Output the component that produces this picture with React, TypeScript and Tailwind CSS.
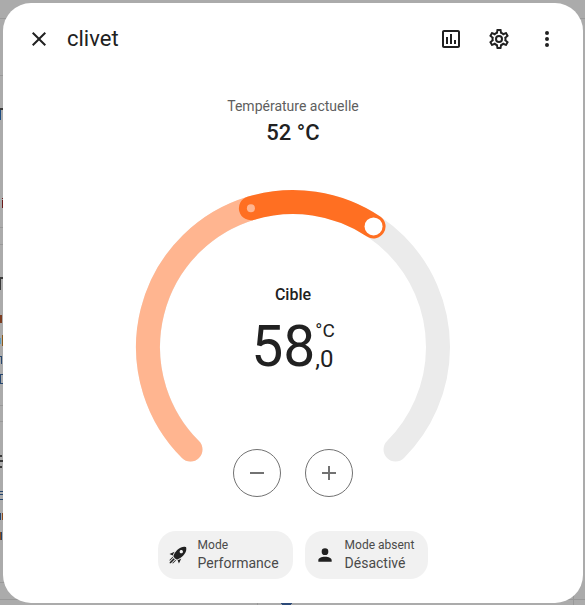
import { useState, type ReactNode } from "react";

const ICONS = {
  close:
    "M19,6.41L17.59,5L12,10.59L6.41,5L5,6.41L10.59,12L5,17.59L6.41,19L12,13.41L17.59,19L19,17.59L13.41,12L19,6.41Z",
  chart:
    "M9 17H7V10H9V17M13 17H11V7H13V17M17 17H15V13H17V17M19 19H5V5H19V19.1M19 3H5C3.9 3 3 3.9 3 5V19C3 20.1 3.9 21 5 21H19C20.1 21 21 20.1 21 19V5C21 3.9 20.1 3 19 3Z",
  cog: "M12,8A4,4 0 0,1 16,12A4,4 0 0,1 12,16A4,4 0 0,1 8,12A4,4 0 0,1 12,8M12,10A2,2 0 0,0 10,12A2,2 0 0,0 12,14A2,2 0 0,0 14,12A2,2 0 0,0 12,10M10,22C9.75,22 9.54,21.82 9.5,21.58L9.13,18.93C8.5,18.68 7.96,18.34 7.44,17.94L4.95,18.95C4.73,19.03 4.46,18.95 4.34,18.73L2.34,15.27C2.21,15.05 2.27,14.78 2.46,14.63L4.57,12.97L4.5,12L4.57,11L2.46,9.37C2.27,9.22 2.21,8.95 2.34,8.73L4.34,5.27C4.46,5.05 4.73,4.96 4.95,5.05L7.44,6.05C7.96,5.66 8.5,5.32 9.13,5.07L9.5,2.42C9.54,2.18 9.75,2 10,2H14C14.25,2 14.46,2.18 14.5,2.42L14.87,5.07C15.5,5.32 16.04,5.66 16.56,6.05L19.05,5.05C19.27,4.96 19.54,5.05 19.66,5.27L21.66,8.73C21.79,8.95 21.73,9.22 21.54,9.37L19.43,11L19.5,12L19.43,13L21.54,14.63C21.73,14.78 21.79,15.05 21.66,15.27L19.66,18.73C19.54,18.95 19.27,19.04 19.05,18.95L16.56,17.95C16.04,18.34 15.5,18.68 14.87,18.93L14.5,21.58C14.46,21.82 14.25,22 14,22H10M11.25,4L10.88,6.61C9.68,6.86 8.62,7.5 7.85,8.39L5.44,7.35L4.69,8.65L6.8,10.2C6.4,11.37 6.4,12.64 6.8,13.8L4.68,15.36L5.43,16.66L7.86,15.62C8.63,16.5 9.68,17.14 10.87,17.38L11.24,20H12.76L13.13,17.39C14.32,17.14 15.37,16.5 16.14,15.62L18.57,16.66L19.32,15.36L17.2,13.81C17.6,12.64 17.6,11.37 17.2,10.2L19.31,8.65L18.56,7.35L16.15,8.39C15.38,7.5 14.32,6.86 13.12,6.62L12.75,4H11.25Z",
  dots: "M12,16A2,2 0 0,1 14,18A2,2 0 0,1 12,20A2,2 0 0,1 10,18A2,2 0 0,1 12,16M12,10A2,2 0 0,1 14,12A2,2 0 0,1 12,14A2,2 0 0,1 10,12A2,2 0 0,1 12,10M12,4A2,2 0 0,1 14,6A2,2 0 0,1 12,8A2,2 0 0,1 10,6A2,2 0 0,1 12,4Z",
  minus: "M19,13H5V11H19V13Z",
  plus: "M19,13H13V19H11V13H5V11H11V5H13V11H19V13Z",
  rocket:
    "M13.13 22.19L11.5 18.36C13.07 17.78 14.54 17 15.9 16.09L13.13 22.19M5.64 12.5L1.81 10.87L7.91 8.1C7 9.46 6.22 10.93 5.64 12.5M21.61 2.39C21.61 2.39 16.66 .269 11 5.93C8.81 8.12 7.5 10.53 6.65 12.64C6.37 13.39 6.56 14.21 7.11 14.77L9.24 16.89C9.79 17.45 10.61 17.63 11.36 17.35C13.5 16.53 15.88 15.19 18.07 13C23.73 7.34 21.61 2.39 21.61 2.39M14.54 9.46C13.76 8.68 13.76 7.41 14.54 6.63S16.59 5.85 17.37 6.63C18.14 7.41 18.15 8.68 17.37 9.46C16.59 10.24 15.32 10.24 14.54 9.46M6.24 22L9.88 18.36C9.54 18.27 9.21 18.12 8.91 17.91L4.83 22H6.24M2 22H3.41L8.18 17.24L6.76 15.83L2 20.59V22M2 19.17L6.09 15.09C5.88 14.79 5.73 14.47 5.64 14.12L2 17.76V19.17Z",
  account:
    "M12,4A4,4 0 0,1 16,8A4,4 0 0,1 12,12A4,4 0 0,1 8,8A4,4 0 0,1 12,4M12,14C16.42,14 20,15.79 20,18V20H4V18C4,15.79 7.58,14 12,14Z",
};

function Icon({ name, small = false }: { name: keyof typeof ICONS; small?: boolean }) {
  return (
    <svg viewBox="0 0 24 24" className={small ? "size-5 shrink-0" : "size-6 shrink-0"} fill="currentColor" aria-hidden="true">
      <path d={ICONS[name]} />
    </svg>
  );
}

function IconButton({ label, children }: { label: string; children: ReactNode }) {
  return (
    <button type="button" aria-label={label} className="flex size-12 items-center justify-center rounded-full">
      {children}
    </button>
  );
}

const MIN = 38;
const MAX = 70;
const CENTER = 160;
const RADIUS = 145;

// The dial covers 270 degrees, open at the bottom.
function pointAt(value: number) {
  const angle = (((value - MIN) / (MAX - MIN)) * 270 - 135) * (Math.PI / 180);
  return { x: CENTER + RADIUS * Math.sin(angle), y: CENTER - RADIUS * Math.cos(angle), angle };
}

function arc(from: number, to: number) {
  const a = pointAt(from);
  const b = pointAt(to);
  const large = b.angle - a.angle > Math.PI ? 1 : 0;
  return `M${a.x} ${a.y}A${RADIUS} ${RADIUS} 0 ${large} 1 ${b.x} ${b.y}`;
}

function Dial({ current, target }: { current: number; target: number }) {
  const dot = pointAt(current);
  const handle = pointAt(target);
  const low = Math.min(current, target);
  const high = Math.max(current, target);
  return (
    <svg viewBox="0 0 320 320" className="col-start-1 row-start-1 size-80" fill="none" strokeWidth="24" strokeLinecap="round" aria-hidden="true">
      <path d={arc(MIN, MAX)} stroke="#ebebeb" />
      <path d={arc(MIN, low)} stroke="#ffb590" />
      <path d={arc(low, high)} stroke="#ff6f22" />
      <circle cx={dot.x} cy={dot.y} r="4" fill="#ffb590" stroke="none" />
      <circle cx={handle.x} cy={handle.y} r="9" fill="#ffffff" stroke="none" />
    </svg>
  );
}

function RoundButton({ label, icon, onClick }: { label: string; icon: "minus" | "plus"; onClick: () => void }) {
  return (
    <button
      type="button"
      aria-label={label}
      onClick={onClick}
      className="flex size-12 items-center justify-center rounded-full border border-[#727272] text-[#727272]"
    >
      <Icon name={icon} />
    </button>
  );
}

function ModeButton({ icon, label, value }: { icon: "rocket" | "account"; label: string; value: string }) {
  return (
    <button type="button" className="flex h-12 items-center gap-2.5 rounded-[18px] bg-[#f1f1f1] pr-3.5 pl-2.5 text-left">
      <Icon name={icon} small />
      <span className="flex flex-col text-[#4a4a4a]">
        <span className="text-xs leading-4">{label}</span>
        <span className="text-sm leading-5">{value}</span>
      </span>
    </button>
  );
}

// Slivers of the dimmed dashboard that show around the dialog.
function Backdrop() {
  return (
    <svg className="absolute inset-0 h-full w-full" shapeRendering="crispEdges" aria-hidden="true">
      <g fill="#999999">
        <path d="M0 18h585v1H0zM0 75h4v1H0zM0 227h4v1H0zM0 244h4v1H0zM0 405h4v1H0zM0 421h4v1H0zM0 582h12v1H0zM0 599h585v1H0zM573 595h1v10h-1zM257 603h1v2h-1z" />
      </g>
      <path d="M0 109h1v11H0z" fill="#1c4b80" />
      <path d="M0 108h3v2H0zM0 277h3v2H0zM0 279h1v11H0z" fill="#3a3a3a" />
      <path d="M2 198h1v1h-1zM2 200h1v8h-1z" fill="#6b1a1a" />
      <path d="M0 315h2v8H0z" fill="#7c3d20" />
      <path d="M2 335h1v11h-1z" fill="#8a5a1c" />
      <path d="M0 338h1v6H0z" fill="#5b9dbb" />
      <path d="M0 356h2v1H0zM1 357h1v7H1zM0 374h3v1H0zM0 375h1v8H0zM0 383h3v1H0z" fill="#26466e" />
      <path d="M0 455h2v2H0zM0 460h3v2H0zM0 466h2v2H0z" fill="#3a3a3a" />
      <path d="M0 491h3v1H0zM0 494h3v1H0zM0 499h3v1H0zM0 513h1v7H0z" fill="#24446c" />
      <path d="M2 513h1v7h-1zM0 532h1v8H0z" fill="#8a4a1c" />
      <path d="M1 532h1v8H1z" fill="#24446c" />
      <path d="M280 603h12l-2 2h-8z" fill="#2c4a78" />
    </svg>
  );
}

export default function App() {
  const [target, setTarget] = useState(58);
  const current = 52;
  const whole = Math.floor(target);
  const decimal = Math.round((target - whole) * 10);
  const change = (step: number) => setTarget((t) => Math.min(MAX, Math.max(MIN, t + step)));

  return (
    <div className="relative min-h-screen overflow-hidden bg-[#ababab] pt-[3px] pr-0.5 pb-0.5 pl-[3px] font-[Roboto,sans-serif] text-[#212121]">
      <Backdrop />
      <main role="dialog" aria-labelledby="dialog-title" className="relative rounded-[28px] bg-white pb-6">
        <header className="flex items-center p-3">
          <IconButton label="Fermer">
            <Icon name="close" />
          </IconButton>
          <h1 id="dialog-title" className="grow pl-1 text-[22px] leading-7">
            clivet
          </h1>
          <IconButton label="Historique">
            <Icon name="chart" />
          </IconButton>
          <IconButton label="Paramètres">
            <Icon name="cog" />
          </IconButton>
          <IconButton label="Plus">
            <Icon name="dots" />
          </IconButton>
        </header>

        <section className="flex flex-col items-center pt-5">
          <p className="text-sm leading-[22px] text-[#5e5e5e]">Température actuelle</p>
          <p className="text-[22px] leading-8 font-medium">{current} °C</p>
        </section>

        <section className="mt-[38px] grid justify-center">
          <Dial current={current} target={target} />
          <div className="col-start-1 row-start-1 flex flex-col items-center justify-between pt-24 pb-2.5">
            <div className="flex flex-col items-center gap-2">
              <label htmlFor="target" className="text-base leading-6 font-medium">
                Cible
              </label>
              <input
                id="target"
                type="range"
                min={MIN}
                max={MAX}
                step={0.5}
                value={target}
                onChange={(e) => setTarget(Number(e.target.value))}
                className="sr-only"
              />
              <p className="flex text-[57px] leading-[64px]">
                {whole}
                <span className="flex flex-col pt-0.5">
                  <span className="text-[19px] leading-7">°C</span>
                  <span className="text-2xl leading-7">,{decimal}</span>
                </span>
              </p>
            </div>
            <div className="flex gap-6">
              <RoundButton label="Diminuer" icon="minus" onClick={() => change(-0.5)} />
              <RoundButton label="Augmenter" icon="plus" onClick={() => change(0.5)} />
            </div>
          </div>
        </section>

        <section className="mt-6 flex flex-wrap justify-center gap-3">
          <ModeButton icon="rocket" label="Mode" value="Performance" />
          <ModeButton icon="account" label="Mode absent" value="Désactivé" />
        </section>
      </main>
    </div>
  );
}
